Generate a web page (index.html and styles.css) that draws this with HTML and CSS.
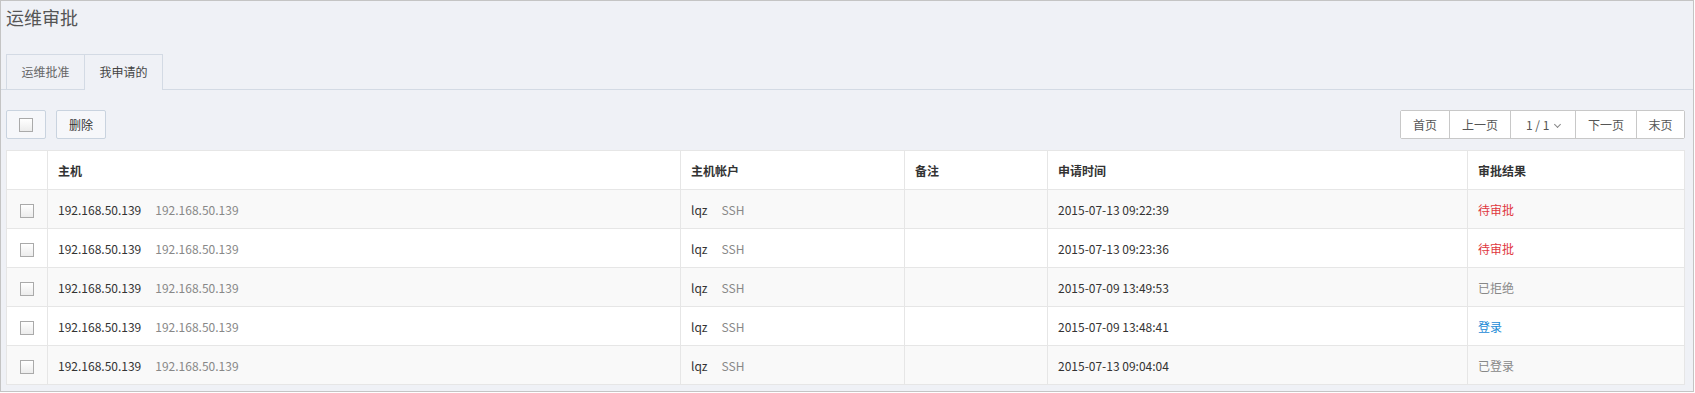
FILE: index.html
```html
<!DOCTYPE html>
<html lang="zh-CN">
<head>
  <meta charset="UTF-8" />
  <title>运维审批</title>
  <link rel="stylesheet" href="styles.css">
</head>
<body>
  <div class="page">
    <h1 class="title">运维审批</h1>

    <div class="tabs">
      <div class="tab">运维批准</div>
      <div class="tab active">我申请的</div>
    </div>

    <div class="toolbar">
      <div class="tools">
        <button class="btn"><span class="check"></span></button>
        <button class="btn">删除</button>
      </div>
      <div class="pager">
        <button class="pg pg-sm">首页</button>
        <button class="pg">上一页</button>
        <button class="pg pg-num">1 / 1 <span class="caret"></span></button>
        <button class="pg">下一页</button>
        <button class="pg pg-sm">末页</button>
      </div>
    </div>

    <table class="grid">
      <colgroup>
        <col style="width:41px">
        <col style="width:633px">
        <col style="width:224px">
        <col style="width:143px">
        <col style="width:420px">
        <col>
      </colgroup>
      <thead>
        <tr>
          <th></th>
          <th>主机</th>
          <th>主机帐户</th>
          <th>备注</th>
          <th>申请时间</th>
          <th>审批结果</th>
        </tr>
      </thead>
      <tbody id="rows"></tbody>
    </table>
  </div>

  <script>
    const rows = [
      { time: "2015-07-13 09:22:39", result: "待审批", cls: "wait" },
      { time: "2015-07-13 09:23:36", result: "待审批", cls: "wait" },
      { time: "2015-07-09 13:49:53", result: "已拒绝", cls: "done" },
      { time: "2015-07-09 13:48:41", result: "登录", cls: "login" },
      { time: "2015-07-13 09:04:04", result: "已登录", cls: "done" },
    ];

    const body = document.getElementById('rows');
    rows.forEach((r) => {
      const tr = document.createElement('tr');
      tr.innerHTML = `
        <td class="cb"><span class="check"></span></td>
        <td>192.168.50.139<span class="sub">192.168.50.139</span></td>
        <td>lqz<span class="sub">SSH</span></td>
        <td></td>
        <td>${r.time}</td>
        <td class="${r.cls}">${r.result}</td>`;
      body.appendChild(tr);
    });
  </script>
</body>
</html>
```

FILE: styles.css
```css
html, body {
  margin: 0;
  height: 100%;
}

body {
  font-family: "Noto Sans CJK SC", "Microsoft YaHei", sans-serif;
  font-size: 12px;
  color: #333;
  background: #fff;
}

.page {
  box-sizing: border-box;
  width: 1694px;
  height: 392px;
  border: 1px solid #c4c4c4;
  background: #eff1f6;
  padding: 0 8px 0 5px;
}

.title {
  margin: 0;
  padding-top: 4px;
  height: 49px;
  font-size: 18px;
  font-weight: normal;
  color: #555;
  line-height: 24px;
}

.tabs {
  display: flex;
  margin: 0 -8px 0 -5px;
  padding-left: 5px;
  border-bottom: 1px solid #d3dae4;
}

.tab {
  width: 77px;
  height: 34px;
  line-height: 34px;
  text-align: center;
  color: #666;
  border: 1px solid #d3dae4;
  border-bottom: none;
  margin-bottom: -1px;
  background: #eff1f6;
}

.tab + .tab {
  border-left: none;
}

.tab.active {
  color: #444;
  height: 35px;
}

.tab:not(.active) {
  border-bottom: 1px solid #d3dae4;
  height: 34px;
}

.toolbar {
  display: flex;
  justify-content: space-between;
  align-items: center;
  margin-top: 20px;
  height: 29px;
}

.tools {
  display: flex;
  gap: 10px;
}

.btn {
  height: 29px;
  padding: 0;
  border: 1px solid #c9d3df;
  border-radius: 2px;
  background: #f6f7fa;
  font-family: inherit;
  font-size: 12px;
  color: #333;
  display: flex;
  align-items: center;
  justify-content: center;
}

.tools .btn:first-child {
  width: 40px;
}

.tools .btn:last-child {
  width: 50px;
}

.check {
  display: inline-block;
  box-sizing: border-box;
  width: 14px;
  height: 14px;
  border: 1px solid #aaa;
  background: linear-gradient(#fff, #ececec);
}

.pager {
  display: flex;
  border: 1px solid #c8c8c8;
  border-radius: 2px;
  background: #fff;
  height: 29px;
  box-sizing: border-box;
}

.pg {
  border: none;
  border-left: 1px solid #c8c8c8;
  background: #fff;
  font-family: inherit;
  font-size: 12px;
  color: #555;
  padding: 0;
  width: 61px;
}

.pg:first-child {
  border-left: none;
}

.pg-sm {
  width: 48px;
}

.pg-num {
  width: 65px;
}

.caret {
  display: inline-block;
  width: 4px;
  height: 4px;
  border-right: 1px solid #888;
  border-bottom: 1px solid #888;
  transform: rotate(45deg);
  margin: 0 0 3px 3px;
}

.grid {
  margin-top: 11px;
  width: 1679px;
  border-collapse: collapse;
  table-layout: fixed;
  background: #fff;
}

.grid th,
.grid td {
  height: 38px;
  padding: 0 10px;
  border: 1px solid #e6e6e6;
  text-align: left;
  white-space: nowrap;
}

.grid th {
  font-weight: bold;
  color: #333;
}

.grid tbody tr:nth-child(odd) {
  background: #f9f9f9;
}

.grid td.cb {
  padding: 0;
  text-align: center;
}

.grid td.cb .check {
  vertical-align: middle;
}

.sub {
  margin-left: 14px;
  color: #888;
}

.wait {
  color: #e0383e;
}

.done {
  color: #888;
}

.login {
  color: #1a8ad6;
}
```
